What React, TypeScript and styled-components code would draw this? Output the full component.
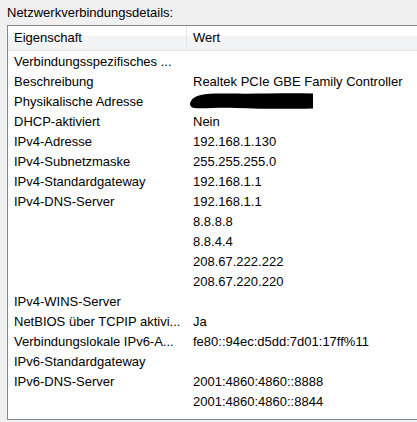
import styled, { createGlobalStyle } from "styled-components";

type Row = { name: string; value?: string; redacted?: boolean };

const rows: Row[] = [
  { name: "Verbindungsspezifisches ..." },
  { name: "Beschreibung", value: "Realtek PCIe GBE Family Controller" },
  { name: "Physikalische Adresse", redacted: true },
  { name: "DHCP-aktiviert", value: "Nein" },
  { name: "IPv4-Adresse", value: "192.168.1.130" },
  { name: "IPv4-Subnetzmaske", value: "255.255.255.0" },
  { name: "IPv4-Standardgateway", value: "192.168.1.1" },
  { name: "IPv4-DNS-Server", value: "192.168.1.1" },
  { name: "", value: "8.8.8.8" },
  { name: "", value: "8.8.4.4" },
  { name: "", value: "208.67.222.222" },
  { name: "", value: "208.67.220.220" },
  { name: "IPv4-WINS-Server" },
  { name: "NetBIOS über TCPIP aktivi...", value: "Ja" },
  { name: "Verbindungslokale IPv6-A...", value: "fe80::94ec:d5dd:7d01:17ff%11" },
  { name: "IPv6-Standardgateway" },
  { name: "IPv6-DNS-Server", value: "2001:4860:4860::8888" },
  { name: "", value: "2001:4860:4860::8844" },
];

const NetworkDetails = () => {
  return (
    <Dialog>
      <Title>Netzwerkverbindungsdetails:</Title>
      <ListBox>
        <Header>
          <HeaderCell $width={179}>Eigenschaft</HeaderCell>
          <HeaderCell>Wert</HeaderCell>
        </Header>
        {rows.map((row, i) => (
          <ListRow key={i}>
            <NameCell>{row.name}</NameCell>
            <ValueCell>
              {row.redacted ? (
                // scribbled-out MAC address
                <Blot width="124" height="16" viewBox="0 0 124 16">
                  <path d="M1 8 C4 1 18 0 40 0.5 C62 1 92 0 123 0.5 L123 15.5 C100 16 72 16 46 15 C30 14 14 16 4 15 C0 14 -1 11 1 8 Z" />
                </Blot>
              ) : (
                row.value
              )}
            </ValueCell>
          </ListRow>
        ))}
      </ListBox>
    </Dialog>
  );
};

export default function App() {
  return (
    <>
      <GlobalStyle />
      <NetworkDetails />
    </>
  );
}

// styles
const GlobalStyle = createGlobalStyle`
  html, body {
    margin: 0;
    padding: 0;
    background: #f0f0f0;
  }
  body {
    font-family: "Liberation Sans", Arial, sans-serif;
    font-size: 13px;
    color: #000;
    overflow: hidden;
  }
`;

const Dialog = styled.div`
  width: 417px;
  height: 422px;
  padding: 3px 0 0 7px;
  box-sizing: border-box;
  overflow: hidden;
`;

const Title = styled.div`
  height: 22px;
  line-height: 20px;
  color: #000;
  white-space: nowrap;
`;

const ListBox = styled.div`
  width: 420px;
  height: 395px;
  box-sizing: border-box;
  border: 1px solid #828790;
  border-right: none;
  background: #fff;
  overflow: hidden;
`;

const Header = styled.div`
  display: flex;
  height: 24px;
  border-bottom: 1px solid #e5e5e5;
  background: linear-gradient(#ffffff 0%, #ffffff 40%, #f3f4f6 42%, #f3f4f6 100%);
`;

const HeaderCell = styled.div<{ $width?: number }>`
  flex: ${(p) => (p.$width ? `0 0 ${p.$width}px` : "1")};
  padding-left: 6px;
  line-height: 24px;
  box-sizing: border-box;
  border-right: ${(p) => (p.$width ? "1px solid #e5e5e5" : "none")};
`;

const ListRow = styled.div`
  display: flex;
  height: 20px;
  align-items: center;
`;

const NameCell = styled.div`
  flex: 0 0 179px;
  padding-left: 6px;
  box-sizing: border-box;
  white-space: nowrap;
  overflow: hidden;
`;

const ValueCell = styled.div`
  flex: 1;
  padding-left: 6px;
  white-space: nowrap;
  display: flex;
  align-items: center;
`;

const Blot = styled.svg`
  display: block;
  margin-left: -3px;
  fill: #000;
`;
